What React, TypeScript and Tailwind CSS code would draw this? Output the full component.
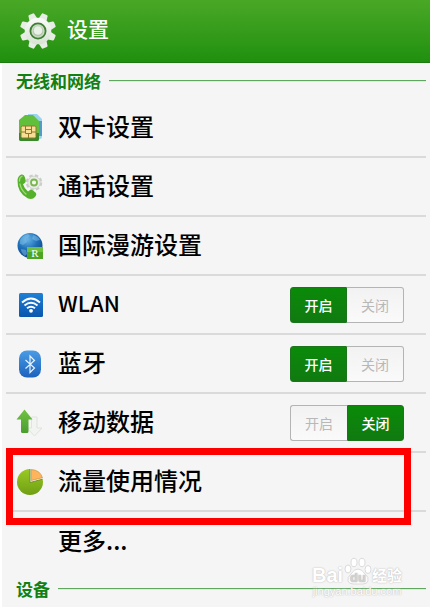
import { useState } from 'react';
import type { ReactNode } from 'react';

function GearIcon() {
  return (
    <svg viewBox="0 0 38 38" className="h-[38px] w-[38px] shrink-0" aria-hidden="true">
      <defs>
        <linearGradient id="gear" gradientUnits="userSpaceOnUse" x1="19" y1="2" x2="19" y2="36">
          <stop offset="0" stopColor="#ffffff" />
          <stop offset="1" stopColor="#d3dfcf" />
        </linearGradient>
      </defs>
      <g fill="#e6ede4">
        {[22.5, 67.5, 112.5, 157.5, 202.5, 247.5, 292.5, 337.5].map((a) => (
          <path key={a} d="M14.500 9 L15.800 1.800 Q16 .8 17 .8 L21 .8 Q22 .8 22.200 1.800 L23.500 9Z" transform={`rotate(${a} 19 19)`} />
        ))}
      </g>
      <circle cx="19" cy="19" r="13.300" fill="url(#gear)" />
      <circle cx="19" cy="19" r="7.600" fill="#c9dcc3" stroke="#3f7f34" strokeWidth="1.800" />
      <circle cx="19" cy="19" r="5.200" fill="#b4c6ae" />
      <circle cx="19" cy="18.500" r="4.300" fill="#e9f0e6" />
    </svg>
  );
}

function SimIcon() {
  return (
    <svg viewBox="0 0 28 30" className="h-[30px] w-7" aria-hidden="true">
      <path d="M12 1h9l5 5v18q0 2-2 2H12z" fill="#9ad4ee" />
      <path d="M23 8h3v15h-3z" fill="#4f9cc9" />
      <path d="M9 2h8l6 6v18q0 2-2 2H5q-2 0-2-2V7z" fill="#62bf3c" />
      <path d="M3 20h20v6q0 2-2 2H5q-2 0-2-2z" fill="#358a29" />
      <rect x="5" y="13" width="15" height="12" rx="1.500" fill="#f6df94" stroke="#94742a" />
      <path d="M5 19h4.500M20 19h-4.500M9.500 13v7.500M15.500 13v7.500M9.500 20.500h6M12.500 20.500V25M9.500 16.500h6" fill="none" stroke="#94742a" />
    </svg>
  );
}

function CallIcon() {
  return (
    <svg viewBox="0 0 28 30" className="h-[30px] w-7" aria-hidden="true">
      <circle cx="18" cy="10.500" r="6.500" fill="none" stroke="#c9cdc6" strokeWidth="3.500" strokeDasharray="3.100 2" />
      <circle cx="18" cy="10.500" r="6.300" fill="#e9ebe7" stroke="#cdd1ca" strokeWidth=".8" />
      <circle cx="18" cy="10.500" r="3" fill="#f7f9f5" stroke="#79b84c" strokeWidth="1.800" />
      <path d="M1.500 8Q2 3.500 5.500 2.500 8 2 9 5.500L9.800 9q0 1.800-2.800 3.200 1.500 4.800 5 7.300 2.300-2.300 4.300-1.500l3.200 2.500q1.700 1.800-.3 4.200-2.500 3.300-7.200 1.800Q1 21 1.500 8z" fill="#55b02c" />
      <path d="M3.500 9Q3.500 5 6 4.300M4 12q1 6 6 10" fill="none" stroke="#a0dc78" strokeWidth="1.400" strokeLinecap="round" />
    </svg>
  );
}

function GlobeIcon() {
  return (
    <svg viewBox="0 0 28 30" className="h-[30px] w-7" aria-hidden="true">
      <defs>
        <radialGradient id="globe" cx=".4" cy=".25" r=".8">
          <stop offset="0" stopColor="#69b4e6" />
          <stop offset=".5" stopColor="#1f70b8" />
          <stop offset="1" stopColor="#0d3f80" />
        </radialGradient>
      </defs>
      <circle cx="14" cy="14.500" r="12.500" fill="url(#globe)" />
      <path d="M4 9q3-5 8-6l2 2-4 3 1 3-4 3-3-1zM17 4q5 1 7 5l-4 1-4-2zM5 18l5 1 1 4-2 2q-4-3-4-7z" fill="#8ac7ea" opacity=".45" />
      <rect x="11" y="16" width="16" height="12" fill="#4da524" />
      <path d="M11 16h16v5H11z" fill="#6cc03e" />
      <text x="19" y="26" textAnchor="middle" fill="#fff" fontSize="11" fontFamily="Liberation Serif, serif">R</text>
    </svg>
  );
}

function WlanIcon() {
  return (
    <svg viewBox="0 0 28 30" className="h-[30px] w-7" aria-hidden="true">
      <defs>
        <linearGradient id="wlan" x1="0" y1="0" x2="0" y2="1">
          <stop offset="0" stopColor="#1f7fd6" />
          <stop offset="1" stopColor="#0a56ae" />
        </linearGradient>
      </defs>
      <rect x="3" y="3" width="24" height="24" rx="1.500" fill="url(#wlan)" />
      <g fill="none" stroke="#fff" strokeWidth="1.900">
        <path d="M6 12.500q9-8 18 0" />
        <path d="M8.500 15.500q6.500-5.500 13 0" />
        <path d="M11 18.300q4-3.300 8 0" />
      </g>
      <circle cx="15" cy="20.800" r="1.900" fill="#fff" />
    </svg>
  );
}

function BluetoothIcon() {
  return (
    <svg viewBox="0 0 28 30" className="h-[30px] w-7" aria-hidden="true">
      <defs>
        <linearGradient id="bt" x1="0" y1="0" x2="0" y2="1">
          <stop offset="0" stopColor="#4a9ce6" />
          <stop offset="1" stopColor="#1b62bc" />
        </linearGradient>
      </defs>
      <rect x="3" y="1.500" width="22" height="27" rx="8" fill="url(#bt)" />
      <path d="M9.500 11 L18.500 19 L14 23.500 V7 L18.500 11.500 L9.500 19.500" fill="none" stroke="#e8f2fc" strokeWidth="1.200" />
    </svg>
  );
}

function DataIcon() {
  return (
    <svg viewBox="0 0 28 30" className="h-[30px] w-7" aria-hidden="true">
      <defs>
        <linearGradient id="up" x1="0" y1="0" x2="0" y2="1">
          <stop offset="0" stopColor="#72c245" />
          <stop offset="1" stopColor="#4b9d2e" />
        </linearGradient>
      </defs>
      <path d="M15.500 9h5.500v11h5L18.500 28 11 20h4.500z" fill="#f2f4f1" stroke="#e0e3de" />
      <path d="M8.500 1.500 16.500 11.500H12.500v12q0 1.500-1.500 1.500H6.500Q5 25 5 23.500v-12H.5z" fill="url(#up)" />
    </svg>
  );
}

function PieIcon() {
  return (
    <svg viewBox="0 0 28 30" className="h-[30px] w-7" aria-hidden="true">
      <defs>
        <linearGradient id="pie" x1="0" y1="0" x2="0" y2="1">
          <stop offset="0" stopColor="#9aca24" />
          <stop offset="1" stopColor="#6f9f12" />
        </linearGradient>
      </defs>
      <circle cx="14" cy="15" r="13" fill="url(#pie)" />
      <path d="M14 15.500V1.500Q25 2 27.300 12z" fill="#f5f5f5" />
      <path d="M15.300 13.500V2.500Q24 3 26.500 10.700z" fill="#fdb45a" stroke="#c08a3a" strokeWidth=".6" />
      <path d="M14 2V15.500L26.500 12.200" fill="none" stroke="#6f8a1c" strokeWidth=".9" />
    </svg>
  );
}

function OnOffToggle({ label, initial }: { label: string; initial: boolean }) {
  const [on, setOn] = useState(initial);
  const active = 'border-[#1c741c] bg-linear-to-b from-[#0a8a08] to-[#107a10] font-medium text-white';
  const idle = 'border-[#b4b4b4] bg-linear-to-b from-[#f2f2f2] to-[#fafafa] text-[#b8b8b8]';
  return (
    <div role="group" aria-label={label} className="grid h-9 w-[114px] shrink-0 grid-cols-2 text-sm">
      <button type="button" aria-pressed={on} onClick={() => setOn(true)} className={`rounded-l-[3px] border ${on ? active : `border-r-0 ${idle}`}`}>
        开启
      </button>
      <button type="button" aria-pressed={!on} onClick={() => setOn(false)} className={`rounded-r-[3px] border ${on ? `border-l-0 ${idle}` : active}`}>
        关闭
      </button>
    </div>
  );
}

function SectionTitle({ children }: { children: ReactNode }) {
  return (
    <div className="flex h-9 items-center gap-2 pl-[10px]">
      <h2 className="text-[17px] leading-6 font-bold text-[#128012]">{children}</h2>
      <span className="h-[2px] flex-1 border-t border-[#5fa75f] bg-[#dcebdc]" />
    </div>
  );
}

type Setting = { name: string; icon?: ReactNode; toggle?: boolean; marked?: boolean };

const settings: Setting[] = [
  { name: '双卡设置', icon: <SimIcon /> },
  { name: '通话设置', icon: <CallIcon /> },
  { name: '国际漫游设置', icon: <GlobeIcon /> },
  { name: 'WLAN', icon: <WlanIcon />, toggle: true },
  { name: '蓝牙', icon: <BluetoothIcon />, toggle: true },
  { name: '移动数据', icon: <DataIcon />, toggle: false },
  { name: '流量使用情况', icon: <PieIcon />, marked: true },
  { name: '更多...' },
];

function SettingRow({ name, icon, toggle, marked }: Setting) {
  return (
    <li className="relative flex h-[59px] items-center border-b-2 border-[#dadada] pr-[22px] last:border-b-0">
      <button type="button" className="flex h-full min-w-0 flex-1 items-center gap-3 pl-[10px] text-left">
        <span className="w-[30px] shrink-0">{icon}</span>
        <span className={`pb-1 font-medium text-black ${name === 'WLAN' ? 'text-[22px]' : 'text-2xl'}`}>{name}</span>
      </button>
      {toggle !== undefined && <OnOffToggle label={name} initial={toggle} />}
      {marked && <span className="pointer-events-none absolute -top-[5px] right-[15px] -bottom-[15px] left-0 z-10 border-[7px] border-[#fe0000]" />}
    </li>
  );
}

function Watermark() {
  return (
    <div className="pointer-events-none absolute right-[28px] bottom-[10px] w-[90px] text-white [text-shadow:0_0_1px_#bbb,0_0_2px_#ccc]">
      <div className="flex h-7 items-end justify-between leading-none">
        <span className="font-['Liberation_Sans',sans-serif] text-xl leading-5 font-bold">Bai</span>
        <svg viewBox="0 0 28 28" className="h-7 w-7" aria-hidden="true">
          <g fill="#fff" stroke="#dadada">
            <ellipse cx="4" cy="12" rx="3" ry="4" />
            <ellipse cx="10" cy="5.500" rx="3" ry="4.200" />
            <ellipse cx="18" cy="5.500" rx="3" ry="4.200" />
            <ellipse cx="24" cy="12.500" rx="3" ry="4" />
            <path d="M14 12q4 0 7 5 4 3 3 7-1 3-5 3H9q-4 0-5-3-1-4 3-7 3-5 7-5z" />
          </g>
          <text x="14" y="25" textAnchor="middle" fill="#d2d2d2" fontSize="13" fontWeight="700" fontFamily="Liberation Sans, sans-serif">du</text>
        </svg>
        <span className="text-[15px] leading-5 font-bold">经验</span>
      </div>
      <div className="text-center font-['Liberation_Sans',sans-serif] text-[11px] leading-3">jingyan.baidu.com</div>
    </div>
  );
}

export default function App() {
  return (
    <div className="relative min-h-screen bg-[#f5f5f5] font-['Noto_Sans_CJK_SC',sans-serif]">
      <header className="flex h-[63px] items-center gap-[10px] border-b border-[#1c7a10] bg-linear-to-b from-[#49a826] to-[#1e900e] pl-[19px]">
        <GearIcon />
        <h1 className="pb-1 text-[21px] font-medium text-white">设置</h1>
      </header>
      <main className="border-l-2 border-white pr-1 pl-1">
        <SectionTitle>无线和网络</SectionTitle>
        <ul>
          {settings.map((s) => (
            <SettingRow key={s.name} {...s} />
          ))}
        </ul>
        <SectionTitle>设备</SectionTitle>
      </main>
      <Watermark />
    </div>
  );
}
